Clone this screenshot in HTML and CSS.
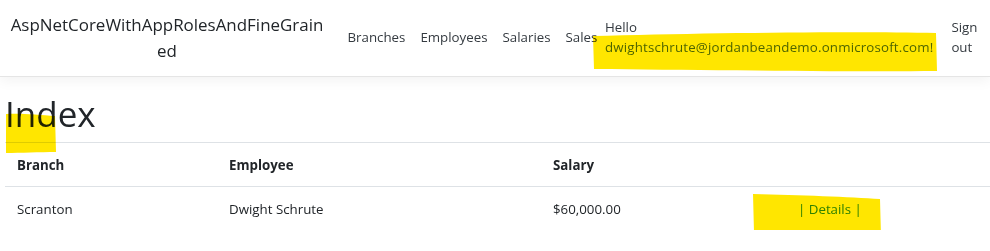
FILE: index.html
```html
<!DOCTYPE html>
<html lang="en">
<head>
    <meta charset="UTF-8">
    <meta name="viewport" content="width=device-width, initial-scale=1.0">
    <title>Index - AspNetCoreWithAppRolesAndFineGrained</title>
    <link rel="stylesheet" href="styles.css">
</head>
<body>
    <header class="navbar">
        <a class="brand" href="#">AspNetCoreWithAppRolesAndFineGrained</a>
        <ul class="nav-links">
            <li><a href="#">Branches</a></li>
            <li><a href="#">Employees</a></li>
            <li><a href="#">Salaries</a></li>
            <li><a href="#">Sales</a></li>
        </ul>
        <ul class="nav-user">
            <li class="user"><span>Hello <span class="email">dwightschrute@jordanbeandemo.onmicrosoft.com!</span></span></li>
            <li class="signout"><a href="#">Sign out</a></li>
        </ul>
    </header>

    <main class="container">
        <h1>Index</h1>
        <table class="table">
            <thead>
                <tr>
                    <th class="col-branch">Branch</th>
                    <th class="col-employee">Employee</th>
                    <th class="col-salary">Salary</th>
                    <th></th>
                </tr>
            </thead>
            <tbody>
                <tr>
                    <td>Scranton</td>
                    <td>Dwight Schrute</td>
                    <td>$60,000.00</td>
                    <td class="actions">| <a href="#">Details</a> |</td>
                </tr>
            </tbody>
        </table>
    </main>

    <!-- marker highlights drawn over the screenshot -->
    <svg class="marker" width="990" height="251" viewBox="0 0 990 251">
        <path d="M593,36 C700,33 850,31 936,33 L937,71 C850,72 700,70 594,69 Z" />
        <path d="M6,114 C20,113 40,115 55,116 L56,152 C40,152 20,153 6,153 Z" />
        <path d="M753,194 C800,195 850,197 880,199 L881,236 C850,235 800,233 754,232 Z" />
    </svg>
</body>
</html>
```

FILE: styles.css
```css
body {
    font-family: "Open Sans", sans-serif;
    font-size: 13.3px;
    line-height: 1.5;
    color: #212529;
    margin: 0;
    background: #fff;
    position: relative;
}

a {
    color: inherit;
    text-decoration: none;
}

ul {
    list-style: none;
    margin: 0;
    padding: 0;
}

.navbar {
    display: flex;
    align-items: center;
    height: 76px;
    padding: 0 8px;
    border-bottom: 1px solid #e5e5e5;
    box-shadow: 0 4px 12px rgba(0, 0, 0, 0.05);
    margin-bottom: 16px;
}

.brand {
    width: 318px;
    flex-shrink: 0;
    font-size: 16.95px;
    line-height: 26px;
    text-align: center;
    word-break: break-all;
    color: #212529;
    margin-right: 14px;
}

.nav-links {
    display: flex;
}

.nav-links a {
    display: block;
    padding: 0 7.5px;
    color: #343a40;
}

.nav-user {
    display: flex;
    margin-left: auto;
}

.nav-user li {
    width: min-content;
    padding: 0 7px;
    color: #343a40;
}

.nav-user .user {
    padding-left: 0;
    padding-right: 11px;
}

.email {
    color: #4f7090;
    letter-spacing: 0.18px;
}

.container {
    padding-left: 5px;
}

h1 {
    font-size: 35px;
    font-weight: 500;
    line-height: 42px;
    margin: 0 0 7px 0;
}

.table {
    width: 100%;
    border-collapse: collapse;
    table-layout: fixed;
}

.table th,
.table td {
    text-align: left;
    padding: 12px 12px 11px;
    line-height: 20px;
    border-top: 1px solid #dee2e6;
}

.table th {
    font-weight: bold;
}

.col-branch {
    width: 188px;
}

.col-employee {
    width: 300px;
}

.col-salary {
    width: 221px;
}

.actions {
    color: #2f8fd0;
}

.marker {
    position: absolute;
    top: 0;
    left: 0;
    pointer-events: none;
    mix-blend-mode: multiply;
}

.marker path {
    fill: #ffe600;
}
```
